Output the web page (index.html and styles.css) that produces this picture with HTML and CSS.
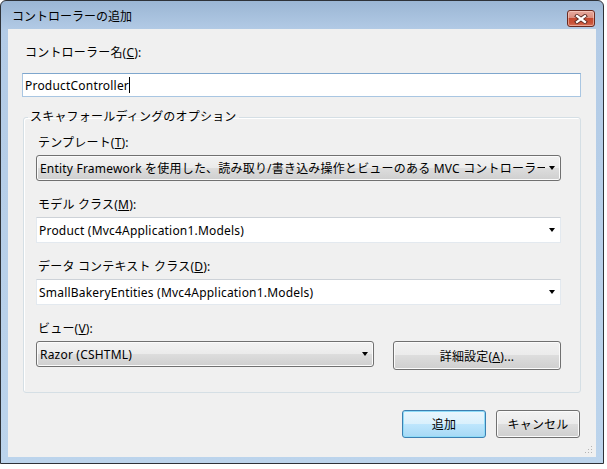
FILE: index.html
```html
<!DOCTYPE html>
<html lang="ja">
<head>
    <meta charset="UTF-8">
    <title>コントローラーの追加</title>
    <link rel="stylesheet" href="styles.css">
</head>
<body>
    <div class="window">
        <div class="titlebar">
            <span class="title">コントローラーの追加</span>
            <button class="close" aria-label="閉じる">
                <svg width="14" height="10" viewBox="0 0 14 10">
                    <path d="M3 2 L11 8 M11 2 L3 8" stroke="#5a2a22" stroke-width="4" stroke-linecap="square" fill="none"/>
                    <path d="M3 2 L11 8 M11 2 L3 8" stroke="#fff" stroke-width="2.2" stroke-linecap="square" fill="none"/>
                </svg>
            </button>
        </div>

        <div class="client">
            <div class="label label-name">コントローラー名(<u>C</u>):</div>
            <div class="textbox">ProductController<span class="caret"></span></div>

            <fieldset class="group">
                <legend>スキャフォールディングのオプション</legend>

                <div class="field">
                    <div class="label">テンプレート(<u>T</u>):</div>
                    <div class="combo combo-list">
                        <span class="combo-text">Entity Framework を使用した、読み取り/書き込み操作とビューのある MVC コントローラー</span>
                        <span class="arrow"></span>
                    </div>
                </div>

                <div class="field">
                    <div class="label">モデル クラス(<u>M</u>):</div>
                    <div class="combo combo-edit">
                        <span class="combo-text">Product (Mvc4Application1.Models)</span>
                        <span class="arrow"></span>
                    </div>
                </div>

                <div class="field">
                    <div class="label">データ コンテキスト クラス(<u>D</u>):</div>
                    <div class="combo combo-edit">
                        <span class="combo-text">SmallBakeryEntities (Mvc4Application1.Models)</span>
                        <span class="arrow"></span>
                    </div>
                </div>

                <div class="field">
                    <div class="label">ビュー(<u>V</u>):</div>
                    <div class="view-row">
                        <div class="combo combo-list combo-view">
                            <span class="combo-text">Razor (CSHTML)</span>
                            <span class="arrow"></span>
                        </div>
                        <button class="btn btn-advanced">詳細設定(<u>A</u>)...</button>
                    </div>
                </div>
            </fieldset>

            <div class="actions">
                <button class="btn btn-default">追加</button>
                <button class="btn">キャンセル</button>
            </div>

            <!-- size grip -->
            <svg class="grip" width="10" height="10" viewBox="0 0 10 10">
                <rect x="8" y="2" width="1" height="1" fill="#b4b4b4"/>
                <rect x="5" y="5" width="1" height="1" fill="#b4b4b4"/>
                <rect x="8" y="5" width="1" height="1" fill="#b4b4b4"/>
                <rect x="2" y="8" width="1" height="1" fill="#b4b4b4"/>
                <rect x="5" y="8" width="1" height="1" fill="#b4b4b4"/>
                <rect x="8" y="8" width="1" height="1" fill="#b4b4b4"/>
            </svg>
        </div>
    </div>
</body>
</html>
```

FILE: styles.css
```css
body {
    margin: 0;
    background: #fff;
    font-family: "Noto Sans", "Noto Sans CJK JP", sans-serif;
    font-size: 12px;
    color: #000;
}
.window {
    box-sizing: border-box;
    width: 604px;
    height: 464px;
    border: 1px solid #2e3238;
    border-radius: 6px 6px 0 0;
    background: linear-gradient(to bottom, #9bb6d4 0, #b3cbe6 30px, #bcd4ec 100%);
    padding-bottom: 6px;
}
.titlebar {
    height: 28px;
    display: flex;
    align-items: flex-start;
    justify-content: space-between;
    padding: 0 8px 0 11px;
}
.title {
    margin-top: 8px;
    line-height: 16px;
    color: #000;
}
.close {
    box-sizing: border-box;
    width: 28px;
    height: 17px;
    margin-top: 9px;
    padding: 0;
    border: 1px solid #6b2a20;
    border-radius: 3px;
    background: linear-gradient(to bottom, #e8aa9e 0%, #d98d7e 45%, #c5492f 50%, #c9533a 80%, #d8775e 100%);
    box-shadow: inset 0 0 0 1px rgba(255, 220, 210, 0.5);
    display: flex;
    align-items: center;
    justify-content: center;
}
.client {
    position: relative;
    box-sizing: border-box;
    height: 428px;
    margin: 0 7px;
    background: #f0f0f0;
    padding: 16px 15px 0 14px;
    letter-spacing: 0.2px;
}
.label {
    line-height: 16px;
    margin-left: 2px;
    white-space: nowrap;
}
.label-name {
    margin-left: 3px;
}
.textbox {
    box-sizing: border-box;
    height: 24px;
    margin-top: 12px;
    background: #fff;
    border: 1px solid #a9c6e2;
    border-top-color: #7ea6cd;
    padding: 0 2px;
    display: flex;
    align-items: center;
}
.caret {
    display: inline-block;
    width: 1px;
    height: 16px;
    background: #000;
}
.group {
    margin: 12px 0 0 1px;
    padding: 10px 19px 22px 12px;
    border: 1px solid #d5dfe5;
    border-radius: 3px;
    box-shadow: inset 1px 1px 0 #fff;
    min-width: 0;
}
.group legend {
    line-height: 16px;
    padding: 0 2px;
    margin-left: -8px;
}
.field + .field {
    margin-top: 16px;
}
.combo {
    box-sizing: border-box;
    height: 26px;
    margin-top: 4px;
    display: flex;
    align-items: center;
    padding: 0 5px 0 3px;
}
.combo-list {
    border: 1px solid #707070;
    border-radius: 3px;
    background: linear-gradient(to bottom, #f2f2f2 0%, #ebebeb 50%, #dddddd 50%, #cfcfcf 100%);
    box-shadow: inset 0 0 0 1px #fbfbfb;
}
.combo-edit {
    background: #fff;
    border: 1px solid #e3e9ef;
    border-top-color: #cdd2d8;
    padding-left: 2px;
}
.combo-text {
    flex: 1;
    overflow: hidden;
    white-space: nowrap;
    text-overflow: clip;
}
.arrow {
    width: 0;
    height: 0;
    margin-left: 4px;
    border-left: 3.5px solid transparent;
    border-right: 3.5px solid transparent;
    border-top: 4px solid #000;
}
.view-row {
    display: flex;
    align-items: flex-start;
    gap: 19px;
    margin-top: 4px;
}
.view-row .combo {
    margin-top: 0;
}
.combo-view {
    width: 338px;
}
.btn {
    box-sizing: border-box;
    height: 28px;
    width: 84px;
    padding: 0;
    font: inherit;
    letter-spacing: inherit;
    color: #000;
    border: 1px solid #707070;
    border-radius: 3px;
    background: linear-gradient(to bottom, #f2f2f2 0%, #ebebeb 50%, #dddddd 50%, #cfcfcf 100%);
    box-shadow: inset 0 0 0 1px #fbfbfb;
}
.btn-advanced {
    width: 168px;
    height: 29px;
}
.btn-default {
    border-color: #3c7fb1;
    background: linear-gradient(to bottom, #eaf6fd 0%, #d9f0fc 50%, #bee6fd 50%, #a7d9f5 100%);
    box-shadow: inset 0 0 0 1px #8fdcf8;
}
.actions {
    display: flex;
    justify-content: flex-end;
    gap: 10px;
    margin-top: 17px;
    margin-right: 1px;
}
.grip {
    position: absolute;
    right: 3px;
    bottom: 3px;
}
```
